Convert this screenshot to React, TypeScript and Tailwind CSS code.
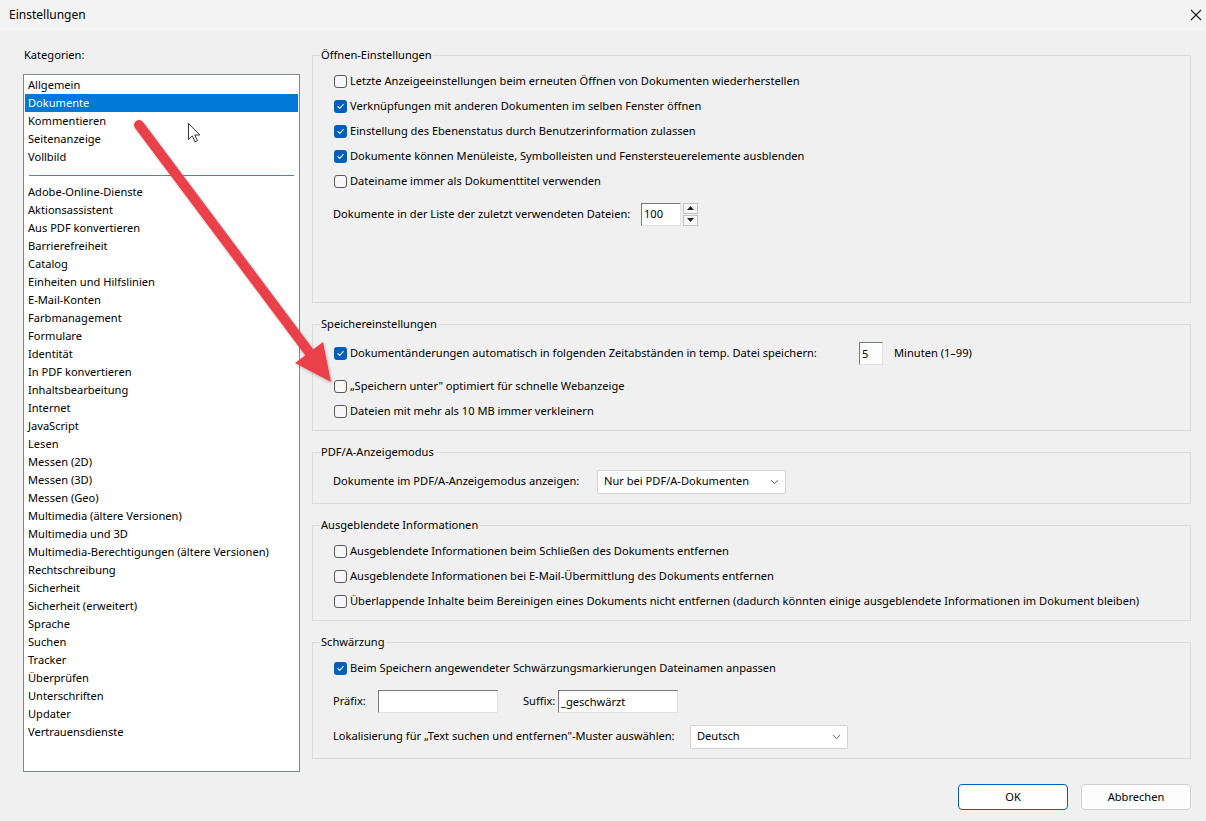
import React from "react";

const FONT = { fontFamily: '"Noto Sans", "Segoe UI", Arial, sans-serif' };

function Check({ checked }: { checked?: boolean }) {
  return checked ? (
    <span className="w-[13px] h-[13px] rounded-[3px] bg-[#005fb8] flex items-center justify-center shrink-0">
      <svg width="9" height="9" viewBox="0 0 9 9">
        <path d="M1.9 4.7 L3.7 6.4 L7.2 2.7" stroke="white" strokeWidth="1.1" fill="none" strokeLinecap="round" strokeLinejoin="round" />
      </svg>
    </span>
  ) : (
    <span className="w-[13px] h-[13px] rounded-[3px] border border-[#5a5a5a] bg-[#f6f6f6] shrink-0" />
  );
}

function CheckRow({ checked, children, className = "" }: { checked?: boolean; children: React.ReactNode; className?: string }) {
  return (
    <div className={"flex items-center h-[25px] gap-[3px] ml-[1px] " + className}>
      <Check checked={checked} />
      <span className="whitespace-nowrap">{children}</span>
    </div>
  );
}

function Group({ title, className = "", children }: { title: string; className?: string; children: React.ReactNode }) {
  return (
    <div className={"relative border border-[#dcdcdc] pl-[20px] " + className}>
      <span className="absolute -top-[9px] left-[7px] px-[1px] bg-[#f0f0f0] leading-[16px] whitespace-nowrap">{title}</span>
      {children}
    </div>
  );
}

function TextBox({ value, className = "" }: { value?: string; className?: string }) {
  return (
    <div
      className={
        "h-[23px] shrink-0 bg-white border border-t-[#7a7a7a] border-l-[#7a7a7a] border-b-[#e3e3e3] border-r-[#e3e3e3] pl-[2px] flex items-center leading-none " +
        className
      }
    >
      {value}
    </div>
  );
}

function Select({ value, className = "" }: { value: string; className?: string }) {
  return (
    <div className={"h-[24px] shrink-0 bg-white border border-[#d5d5d5] rounded-[2px] flex items-center justify-between pl-[6px] pr-[6px] " + className}>
      <span className="whitespace-nowrap">{value}</span>
      <svg width="9" height="6" viewBox="0 0 9 6">
        <path d="M1 1.2 L4.5 4.6 L8 1.2" stroke="#606060" strokeWidth="1" fill="none" />
      </svg>
    </div>
  );
}

const mainItems = ["Allgemein", "Dokumente", "Kommentieren", "Seitenanzeige", "Vollbild"];
const otherItems = [
  "Adobe-Online-Dienste",
  "Aktionsassistent",
  "Aus PDF konvertieren",
  "Barrierefreiheit",
  "Catalog",
  "Einheiten und Hilfslinien",
  "E-Mail-Konten",
  "Farbmanagement",
  "Formulare",
  "Identität",
  "In PDF konvertieren",
  "Inhaltsbearbeitung",
  "Internet",
  "JavaScript",
  "Lesen",
  "Messen (2D)",
  "Messen (3D)",
  "Messen (Geo)",
  "Multimedia (ältere Versionen)",
  "Multimedia und 3D",
  "Multimedia-Berechtigungen (ältere Versionen)",
  "Rechtschreibung",
  "Sicherheit",
  "Sicherheit (erweitert)",
  "Sprache",
  "Suchen",
  "Tracker",
  "Überprüfen",
  "Unterschriften",
  "Updater",
  "Vertrauensdienste",
];

export default function App() {
  return (
    <div className="relative w-[1206px] h-[821px] bg-[#f0f0f0] text-black text-[11.1px] overflow-hidden" style={FONT}>
      {/* title bar */}
      <div className="h-[30px] bg-[#f3f3f3] flex items-center justify-between pl-[9px] pr-[3px]">
        <span className="text-[12px]">Einstellungen</span>
        <svg width="14" height="14" viewBox="0 0 14 14">
          <path d="M2 2 L12 12 M12 2 L2 12" stroke="#1a1a1a" strokeWidth="1.1" />
        </svg>
      </div>

      <div className="flex pl-[23px] pt-[17px]">
        {/* left column */}
        <div className="w-[277px] flex flex-col">
          <div className="h-[16px] leading-[16px] pl-[1px]">Kategorien:</div>
          <div className="mt-[11px] h-[698px] bg-white border border-[#828790] p-[1px]">
            {mainItems.map((it) => (
              <div
                key={it}
                className={
                  "h-[18px] flex items-center pl-[3px] whitespace-nowrap " + (it === "Dokumente" ? "bg-[#0078d7] text-white" : "")
                }
              >
                {it}
              </div>
            ))}
            <div className="mt-[9px] mb-[7px] mx-[4px] h-px bg-[#4a86c5]" />
            {otherItems.map((it) => (
              <div key={it} className="h-[18px] flex items-center pl-[3px] whitespace-nowrap">
                {it}
              </div>
            ))}
          </div>
        </div>

        {/* right column */}
        <div className="ml-[12px] w-[879px] flex flex-col pt-[8px]">
          <Group title="Öffnen-Einstellungen" className="h-[248px] pt-[13px]">
            <CheckRow>Letzte Anzeigeeinstellungen beim erneuten Öffnen von Dokumenten wiederherstellen</CheckRow>
            <CheckRow checked>Verknüpfungen mit anderen Dokumenten im selben Fenster öffnen</CheckRow>
            <CheckRow checked>Einstellung des Ebenenstatus durch Benutzerinformation zulassen</CheckRow>
            <CheckRow checked>Dokumente können Menüleiste, Symbolleisten und Fenstersteuerelemente ausblenden</CheckRow>
            <CheckRow>Dateiname immer als Dokumenttitel verwenden</CheckRow>
            <div className="mt-[8px] flex items-center h-[24px]">
              <span className="w-[308px] shrink-0 whitespace-nowrap">Dokumente in der Liste der zuletzt verwendeten Dateien:</span>
              <TextBox value="100" className="w-[40px]" />
              <div className="ml-[2px] flex flex-col gap-[1px]">
                <div className="w-[15px] h-[11px] border border-[#c3c3c3] bg-[#f7f7f7] flex items-center justify-center">
                  <svg width="7" height="4" viewBox="0 0 7 4">
                    <path d="M3.5 0 L7 4 L0 4 Z" fill="#222" />
                  </svg>
                </div>
                <div className="w-[15px] h-[11px] border border-[#c3c3c3] bg-[#f7f7f7] flex items-center justify-center">
                  <svg width="7" height="4" viewBox="0 0 7 4">
                    <path d="M0 0 L7 0 L3.5 4 Z" fill="#222" />
                  </svg>
                </div>
              </div>
            </div>
          </Group>

          <Group title="Speichereinstellungen" className="mt-[21px] h-[107px] pt-[16px]">
            <div className="flex items-center h-[25px] ml-[1px]">
              <Check checked />
              <span className="ml-[3px] w-[509px] shrink-0 whitespace-nowrap">
                Dokumentänderungen automatisch in folgenden Zeitabständen in temp. Datei speichern:
              </span>
              <TextBox value="5" className="w-[24px]" />
              <span className="ml-[11px] whitespace-nowrap">Minuten (1–99)</span>
            </div>
            <CheckRow className="mt-[8px]">„Speichern unter" optimiert für schnelle Webanzeige</CheckRow>
            <CheckRow>Dateien mit mehr als 10 MB immer verkleinern</CheckRow>
          </Group>

          <Group title="PDF/A-Anzeigemodus" className="mt-[21px] h-[52px] pt-[16px]">
            <div className="flex items-center h-[25px]">
              <span className="w-[264px] shrink-0 whitespace-nowrap">Dokumente im PDF/A-Anzeigemodus anzeigen:</span>
              <Select value="Nur bei PDF/A-Dokumenten" className="w-[189px]" />
            </div>
          </Group>

          <Group title="Ausgeblendete Informationen" className="mt-[21px] h-[96px] pt-[13px]">
            <CheckRow>Ausgeblendete Informationen beim Schließen des Dokuments entfernen</CheckRow>
            <CheckRow>Ausgeblendete Informationen bei E-Mail-Übermittlung des Dokuments entfernen</CheckRow>
            <CheckRow>
              Überlappende Inhalte beim Bereinigen eines Dokuments nicht entfernen (dadurch könnten einige ausgeblendete Informationen im Dokument bleiben)
            </CheckRow>
          </Group>

          <Group title="Schwärzung" className="mt-[21px] h-[117px] pt-[13px]">
            <CheckRow checked>Beim Speichern angewendeter Schwärzungsmarkierungen Dateinamen anpassen</CheckRow>
            <div className="mt-[8px] flex items-center h-[25px]">
              <span className="w-[45px] shrink-0 whitespace-nowrap">Präfix:</span>
              <TextBox className="w-[120px]" />
              <span className="ml-[25px] w-[35px] shrink-0 whitespace-nowrap">Suffix:</span>
              <TextBox value="_geschwärzt" className="w-[120px]" />
            </div>
            <div className="mt-[10px] flex items-center h-[25px]">
              <span className="w-[357px] shrink-0 whitespace-nowrap">Lokalisierung für „Text suchen und entfernen"-Muster auswählen:</span>
              <Select value="Deutsch" className="w-[158px]" />
            </div>
          </Group>

          <div className="mt-[25px] flex justify-end gap-[13px]">
            <button className="w-[110px] h-[26px] rounded-[4px] border border-[#005fb8] bg-white flex items-center justify-center">
              OK
            </button>
            <button className="w-[110px] h-[26px] rounded-[4px] border border-[#d0d0d0] bg-[#fdfdfd] flex items-center justify-center">
              Abbrechen
            </button>
          </div>
        </div>
      </div>

      {/* annotation arrow overlay */}
      <svg className="absolute left-0 top-0 pointer-events-none" width="1206" height="821" viewBox="0 0 1206 821">
        <defs>
          <filter id="sh" x="-10%" y="-10%" width="130%" height="130%">
            <feDropShadow dx="1" dy="1.5" stdDeviation="1.5" floodColor="#000" floodOpacity="0.25" />
          </filter>
        </defs>
        <g filter="url(#sh)">
          <line x1="139" y1="125" x2="312" y2="356" stroke="#ea4049" strokeWidth="10" strokeLinecap="round" />
          <polygon points="331,382 295,363 323,342" fill="#ea4049" />
        </g>
        {/* mouse cursor */}
        <path
          d="M188.5 123.5 L188.5 139.5 L192.3 135.9 L195 141.8 L197.4 140.7 L194.8 135 L199.8 135 Z"
          fill="white"
          stroke="#222"
          strokeWidth="0.9"
          strokeLinejoin="round"
        />
      </svg>
    </div>
  );
}
